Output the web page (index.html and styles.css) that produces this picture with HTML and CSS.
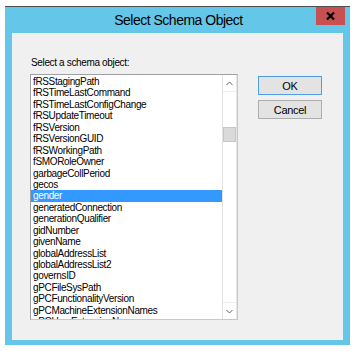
FILE: index.html
```html
<!DOCTYPE html>
<html lang="en">
  <head>
    <meta charset="utf-8" />
    <title>Select Schema Object</title>
    <link rel="stylesheet" href="styles.css">
  </head>
  <body>
    <div class="window">
      <div class="titlebar">
        <div class="title">Select Schema Object</div>
        <button type="button" class="close-button">
          <svg width="9" height="8" viewBox="0 0 9 8">
            <path d="M1 0.5 L8 7.5 M8 0.5 L1 7.5" stroke="#000" stroke-width="2.2" fill="none" />
          </svg>
        </button>
      </div>

      <div class="panel">
        <div class="left-column">
          <div class="label">Select a schema object:</div>
          <div class="listbox">
            <div class="items">
              <div class="item">fRSStagingPath</div>
              <div class="item">fRSTimeLastCommand</div>
              <div class="item">fRSTimeLastConfigChange</div>
              <div class="item">fRSUpdateTimeout</div>
              <div class="item">fRSVersion</div>
              <div class="item">fRSVersionGUID</div>
              <div class="item">fRSWorkingPath</div>
              <div class="item">fSMORoleOwner</div>
              <div class="item">garbageCollPeriod</div>
              <div class="item">gecos</div>
              <div class="item selected">gender</div>
              <div class="item">generatedConnection</div>
              <div class="item">generationQualifier</div>
              <div class="item">gidNumber</div>
              <div class="item">givenName</div>
              <div class="item">globalAddressList</div>
              <div class="item">globalAddressList2</div>
              <div class="item">governsID</div>
              <div class="item">gPCFileSysPath</div>
              <div class="item">gPCFunctionalityVersion</div>
              <div class="item">gPCMachineExtensionNames</div>
              <div class="item">gPCUserExtensionNames</div>
            </div>
            <div class="scrollbar">
              <div class="arrow arrow-up">
                <svg width="7" height="5" viewBox="0 0 7 5">
                  <polyline points="0.5,4 3.5,1 6.5,4" stroke="#606060" fill="none" />
                </svg>
              </div>
              <div class="track">
                <div class="thumb"></div>
              </div>
              <div class="arrow arrow-down">
                <svg width="7" height="5" viewBox="0 0 7 5">
                  <polyline points="0.5,1 3.5,4 6.5,1" stroke="#606060" fill="none" />
                </svg>
              </div>
            </div>
          </div>
        </div>

        <div class="buttons">
          <button type="button" class="dialog-button default-button">OK</button>
          <button type="button" class="dialog-button">Cancel</button>
        </div>
      </div>
    </div>
  </body>
</html>
```

FILE: styles.css
```css
body {
  margin: 0;
  background-color: #fff;
  font-family: "Liberation Sans", Arial, sans-serif;
}

.window {
  margin: 6px 0 0 5px;
  width: 345px;
  height: 339px;
  box-sizing: border-box;
  background-color: #64c7ea;
  border-top: 1px solid #4d4d4d;
  padding: 0 5px 5px 7px;
  display: flex;
  flex-direction: column;
}

.titlebar {
  height: 26px;
  display: grid;
  grid-template-columns: 1fr auto 1fr;
}

.title {
  grid-column: 2;
  align-self: center;
  font-size: 14px;
  letter-spacing: -0.5px;
  color: #000;
}

.close-button {
  grid-column: 3;
  justify-self: end;
  align-self: start;
  width: 29px;
  height: 18px;
  padding: 0;
  border: none;
  background-color: #c75050;
  display: flex;
  align-items: center;
  justify-content: center;
}

.panel {
  flex: 1;
  margin-right: 2px;
  background-color: #f0f0f0;
  padding: 24px 0 0 18px;
  display: flex;
  gap: 20px;
}

.label {
  height: 12px;
  line-height: 12px;
  margin: 0 0 5px 1px;
  font-size: 10px;
  letter-spacing: -0.35px;
  color: #000;
}

.listbox {
  width: 208px;
  height: 246px;
  box-sizing: border-box;
  border: 1px solid #a0a0a0;
  border-right-color: #c8c8c8;
  border-bottom-color: #c8c8c8;
  background-color: #fff;
  display: flex;
}

.items {
  flex: 1;
  overflow: hidden;
  padding-top: 1px;
}

.item {
  height: 11.45px;
  line-height: 11.45px;
  padding-left: 2px;
  font-size: 10px;
  letter-spacing: -0.35px;
  color: #000;
  white-space: nowrap;
}

.item.selected {
  background-color: #3399ff;
  color: #fff;
}

.scrollbar {
  width: 15px;
  box-sizing: border-box;
  border-left: 1px solid #e2e2e2;
  border-right: 1px solid #e6e6e6;
  display: flex;
  flex-direction: column;
}

.arrow {
  height: 16px;
  display: flex;
  align-items: center;
  justify-content: center;
}

.arrow-up {
  border-bottom: 1px solid #ececec;
}

.arrow-down {
  border-top: 1px solid #ececec;
}

.track {
  flex: 1;
  padding-top: 35px;
}

.thumb {
  height: 15px;
  box-sizing: border-box;
  background-color: #dadada;
  border: 1px solid #c6c6c6;
}

.buttons {
  padding-top: 19px;
  display: flex;
  flex-direction: column;
  gap: 5px;
}

.dialog-button {
  width: 64px;
  height: 19px;
  padding: 0;
  box-sizing: border-box;
  background-color: #e3e3e3;
  border: 1px solid #adadad;
  font-family: "Liberation Sans", Arial, sans-serif;
  font-size: 11px;
  letter-spacing: -0.3px;
  color: #000;
}

.default-button {
  border-color: #4f9ee0;
}
```
